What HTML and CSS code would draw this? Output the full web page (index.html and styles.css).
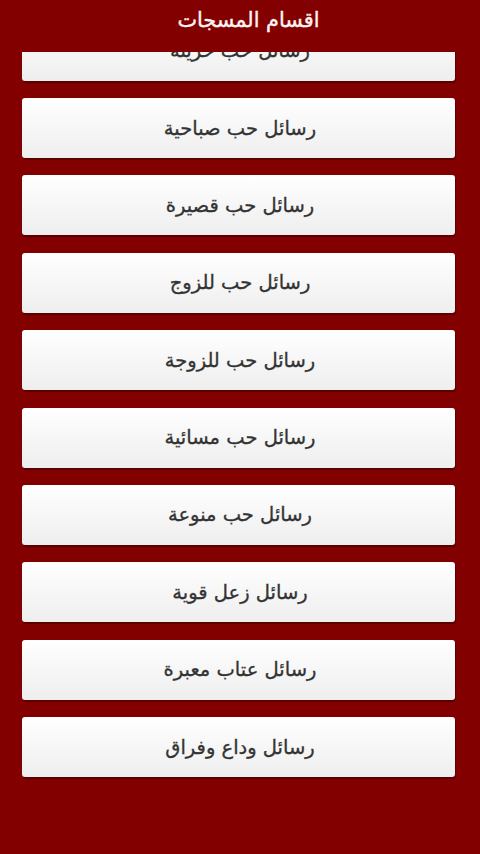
FILE: index.html
```html
<!DOCTYPE html>
<html lang="ar" dir="rtl">
<head>
<meta charset="utf-8">
<title>اقسام المسجات</title>
<link rel="stylesheet" href="styles.css">
</head>
<body>
<div class="app">
  <header class="topbar"><h1 class="title">اقسام المسجات</h1></header>
  <main class="viewport">
    <ul class="list">
      <li class="card">رسائل حب حزينة</li>
      <li class="card">رسائل حب صباحية</li>
      <li class="card">رسائل حب قصيرة</li>
      <li class="card">رسائل حب للزوج</li>
      <li class="card">رسائل حب للزوجة</li>
      <li class="card">رسائل حب مسائية</li>
      <li class="card">رسائل حب منوعة</li>
      <li class="card">رسائل زعل قوية</li>
      <li class="card">رسائل عتاب معبرة</li>
      <li class="card">رسائل وداع وفراق</li>
    </ul>
  </main>
</div>
</body>
</html>
```
FILE: styles.css
```css
html, body {
  margin: 0;
  padding: 0;
  background: #820000;
}
body {
  font-family: "DejaVu Sans", "Noto Sans", sans-serif;
}
.app {
  width: 480px;
  height: 854px;
  display: flex;
  flex-direction: column;
  overflow: hidden;
  background: #820000;
}
.topbar {
  height: 52px;
  flex: none;
  display: flex;
  justify-content: center;
  align-items: flex-start;
  padding-left: 17px;
  background: #820000;
  position: relative;
  z-index: 2;
}
.title {
  margin: 7px 0 0;
  font-size: 20.8px;
  font-weight: normal;
  color: #fff4f4;
  line-height: 26px;
  -webkit-text-stroke: 0.4px #fff4f4;
}
.viewport {
  flex: 1;
  overflow: hidden;
}
.list {
  list-style: none;
  margin: -31.4px 0 0;
  padding: 0 25px 0 22px;
  display: flex;
  flex-direction: column;
  gap: 17.4px;
}
.card {
  height: 60px;
  display: flex;
  align-items: center;
  justify-content: center;
  border-radius: 3px;
  background: linear-gradient(#ffffff, #eeeeee);
  box-shadow: 1px 2px 1px #5a0000;
  color: #333333;
  font-size: 19.5px;
  font-weight: normal;
  -webkit-text-stroke: 0.3px #333333;
  padding-left: 3px;
}
```
